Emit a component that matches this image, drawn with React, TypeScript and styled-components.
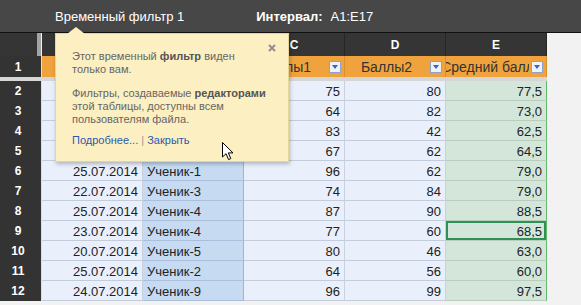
import React from "react";
import styled, { createGlobalStyle } from "styled-components";

const GlobalStyle = createGlobalStyle`
  body {
    margin: 0;
    background: #f2f2f2;
    font-family: "Liberation Sans", Arial, sans-serif;
    overflow: hidden;
  }
`;

const Page = styled.div`
  position: relative;
  width: 581px;
  height: 305px;
  overflow: hidden;
  background: #f2f2f2;
`;

const TopBar = styled.div`
  display: flex;
  align-items: center;
  height: 32px;
  padding-left: 55px;
  gap: 72px;
  background: #474747;
  border-bottom: 1px solid #111;
  color: #fff;
  font-size: 13px;
`;

const RangeLabel = styled.span`
  font-weight: bold;
  margin-right: 8px;
`;

const Row = styled.div`
  display: grid;
  grid-template-columns: 42px repeat(5, 101px) 1fr;
`;

const Corner = styled.div`
  background: #353535;
  border-right: 4px solid #a3a3a3;
  margin-right: 1px;
`;

const Letter = styled.div`
  height: 23px;
  display: flex;
  align-items: center;
  justify-content: center;
  background: #353535;
  border-right: 1px solid #262626;
  color: #fff;
  font-size: 12px;
  font-weight: bold;
`;

const Empty = styled.div`
  background: #f2f2f2;
`;

const RowNum = styled.div`
  display: flex;
  align-items: center;
  justify-content: center;
  padding-right: 5px;
  background: #333;
  border-right: 1px solid #d8dde6;
  color: #fff;
  font-size: 12px;
  font-weight: bold;
`;

const HeadCell = styled.div`
  height: 21px;
  display: flex;
  align-items: center;
  background: #f0a33c;
  border-right: 1px solid #d98f2c;
  overflow: hidden;
`;

const HeadText = styled.div`
  flex: 1;
  display: flex;
  justify-content: center;
  overflow: hidden;
  white-space: nowrap;
  color: #333;
  font-size: 14px;
`;

const FilterButton = styled.div`
  flex: none;
  width: 10px;
  height: 10px;
  margin: 0 3px 0 2px;
  display: flex;
  align-items: center;
  justify-content: center;
  background: #eef2fb;
  border: 1px solid #8fa3c9;
  &::after {
    content: "";
    border-left: 3px solid transparent;
    border-right: 3px solid transparent;
    border-top: 4px solid #3f63b5;
    margin-top: 1px;
  }
`;

const FreezeBar = styled.div`
  height: 4px;
  width: 547px;
  background: #d6d6d6;
`;

type Kind = "plain" | "name" | "avg";

const Cell = styled.div<{ $kind: Kind; $align: "left" | "right" }>`
  position: relative;
  height: 20px;
  box-sizing: border-box;
  padding: 2px 4px 0 4px;
  line-height: 18px;
  font-size: 13px;
  color: #222;
  white-space: nowrap;
  overflow: hidden;
  text-align: ${(p) => p.$align};
  border-bottom: 1px solid
    ${(p) => (p.$kind === "avg" ? "#b7cdbd" : p.$kind === "name" ? "#a9bfdc" : "#c3ccda")};
  border-right: 1px solid
    ${(p) => (p.$kind === "avg" ? "#63b96b" : p.$kind === "name" ? "#9fb5d3" : "#c8d1df")};
  background: ${(p) =>
    p.$kind === "avg" ? "#d3e6d9" : p.$kind === "name" ? "#c6daf2" : "#eaf0fb"};
`;

const Selection = styled.div`
  position: absolute;
  inset: 0;
  border: 2px solid #2e9255;
`;

const Popup = styled.div`
  position: absolute;
  left: 55px;
  top: 33px;
  width: 234px;
  height: 129px;
  box-sizing: border-box;
  padding: 16px 16px 0 16px;
  background: #fcefc1;
  border: 1px solid #e6d594;
  box-shadow: 1px 2px 4px rgba(0, 0, 0, 0.25);
  color: #666;
  font-size: 11px;
  line-height: 13px;
  white-space: nowrap;
  &::before {
    content: "";
    position: absolute;
    left: 11px;
    top: -7px;
    border-left: 9px solid transparent;
    border-right: 9px solid transparent;
    border-bottom: 7px solid #fcefc1;
  }
`;

const Para = styled.p`
  margin: 0;
  & + & {
    margin-top: 11px;
  }
  b {
    color: #555;
  }
`;

const Links = styled.div`
  margin-top: 8px;
  color: #999;
  a {
    color: #2a59b0;
    text-decoration: none;
  }
`;

const Close = styled.svg`
  position: absolute;
  top: 10px;
  right: 12px;
`;

const Cursor = styled.svg`
  position: absolute;
  left: 222px;
  top: 142px;
`;

type DataRow = [string, string, number, number, string];

const rows: DataRow[] = [
  ["24.07.2014", "Ученик-7", 75, 80, "77,5"],
  ["21.07.2014", "Ученик-6", 64, 82, "73,0"],
  ["23.07.2014", "Ученик-8", 83, 42, "62,5"],
  ["22.07.2014", "Ученик-2", 67, 62, "64,5"],
  ["25.07.2014", "Ученик-1", 96, 62, "79,0"],
  ["22.07.2014", "Ученик-3", 74, 84, "79,0"],
  ["25.07.2014", "Ученик-4", 87, 90, "88,5"],
  ["23.07.2014", "Ученик-4", 77, 60, "68,5"],
  ["20.07.2014", "Ученик-5", 80, 46, "63,0"],
  ["25.07.2014", "Ученик-2", 64, 56, "60,0"],
  ["24.07.2014", "Ученик-9", 96, 99, "97,5"],
];

const headers = ["Дата", "Ученик", "Баллы1", "Баллы2", "Средний балл"];

export default function App() {
  return (
    <Page>
      <GlobalStyle />
      <TopBar>
        <span>Временный фильтр 1</span>
        <span>
          <RangeLabel>Интервал:</RangeLabel>A1:E17
        </span>
      </TopBar>

      <Row>
        <Corner />
        {["A", "B", "C", "D", "E"].map((l) => (
          <Letter key={l}>{l}</Letter>
        ))}
        <Empty />
      </Row>

      <Row>
        <RowNum>1</RowNum>
        {headers.map((h) => (
          <HeadCell key={h}>
            <HeadText>{h}</HeadText>
            <FilterButton />
          </HeadCell>
        ))}
        <Empty />
      </Row>

      <FreezeBar />

      {rows.map((r, i) => (
        <Row key={i}>
          <RowNum>{i + 2}</RowNum>
          <Cell $kind="plain" $align="right">{r[0]}</Cell>
          <Cell $kind="name" $align="left">{r[1]}</Cell>
          <Cell $kind="plain" $align="right">{r[2]}</Cell>
          <Cell $kind="plain" $align="right">{r[3]}</Cell>
          <Cell $kind="avg" $align="right">
            {r[4]}
            {i + 2 === 9 && <Selection />}
          </Cell>
          <Empty />
        </Row>
      ))}

      <Popup>
        <Close width="8" height="8" viewBox="0 0 8 8">
          <path d="M1 1L7 7M7 1L1 7" stroke="#8f8f8f" strokeWidth="2" />
        </Close>
        <Para>
          Этот временный <b>фильтр</b> виден
          <br />
          только вам.
        </Para>
        <Para>
          Фильтры, создаваемые <b>редакторами</b>
          <br />
          этой таблицы, доступны всем
          <br />
          пользователям файла.
        </Para>
        <Links>
          <a href="#">Подробнее...</a> | <a href="#">Закрыть</a>
        </Links>
      </Popup>

      <Cursor width="13" height="19" viewBox="0 0 13 19">
        <path
          d="M0.5 0.5 L0.5 15 L4 11.7 L6.6 17.6 L8.8 16.6 L6.3 10.9 L11 10.9 Z"
          fill="#fff"
          stroke="#000"
          strokeWidth="1"
          strokeLinejoin="round"
        />
      </Cursor>
    </Page>
  );
}
